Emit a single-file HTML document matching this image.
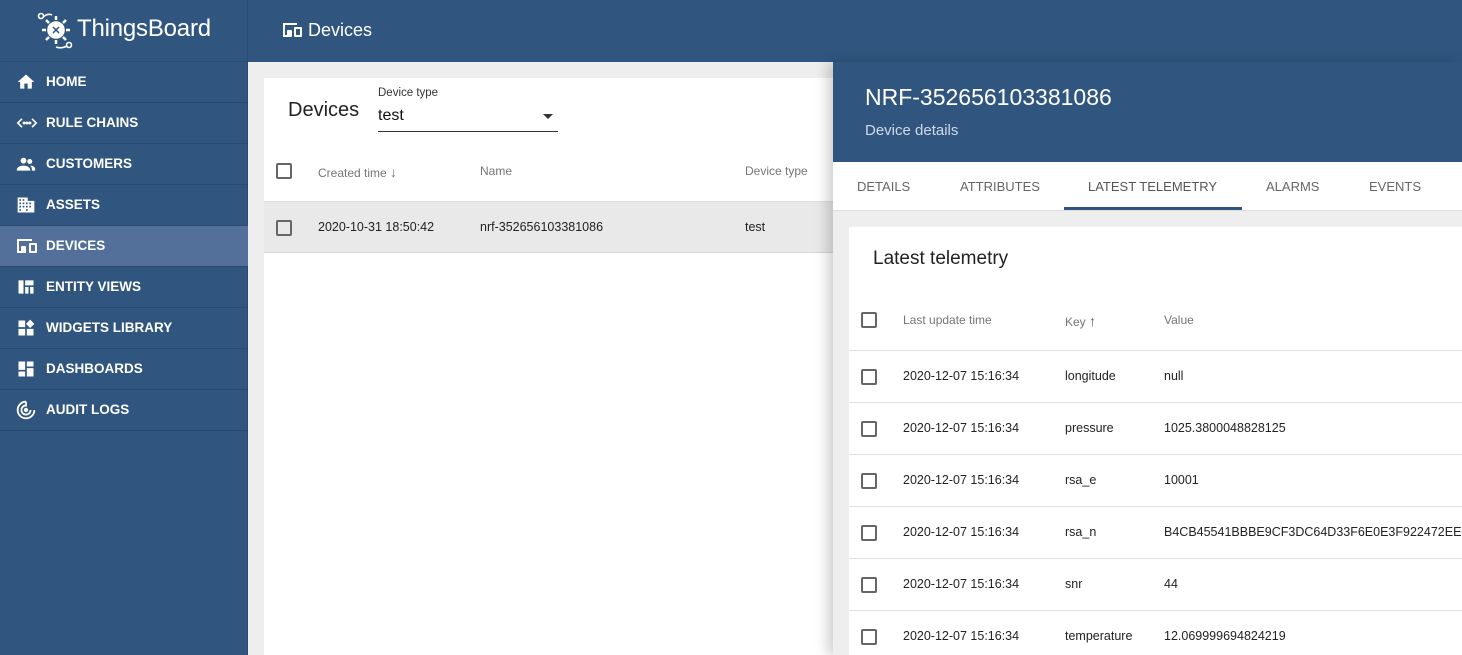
<!DOCTYPE html>
<html><head><meta charset="utf-8"><style>
*{box-sizing:border-box;margin:0;padding:0}
body{width:1462px;height:655px;overflow:hidden;font-family:"Liberation Sans",sans-serif;background:#eeeeee;position:relative}
.a{position:absolute}
.top{left:0;top:0;width:1462px;height:62px;background:#305680}
.side{left:0;top:62px;width:248px;height:593px;background:#305680;border-right:1px solid #2a4b70}
.logo{left:0;top:0;width:248px;height:62px;border-right:1px solid #2a4b70;border-bottom:1px solid #2a4b70}
.mi{position:absolute;left:0;width:248px;height:41px;border-bottom:1px solid #284a6f;color:#fff;font-weight:bold;font-size:13.5px;line-height:40px;padding-left:46px}
.mi.act{background:#527099}
.mi svg{position:absolute;left:16px;top:10px}
.cb{position:absolute;width:16px;height:16px;border:2px solid #666;border-radius:2px}
.txt{position:absolute;font-size:12.5px;color:#222;white-space:nowrap}
.hd{position:absolute;font-size:12px;color:#757575;white-space:nowrap}
.line{position:absolute;height:1px;background:#e0e0e0}
</style></head><body>
<div class="a top"></div>
<div class="a logo"></div>
<svg class="a" style="left:36px;top:11px" width="40" height="40" viewBox="0 0 40 40" fill="none" stroke="#fff" stroke-width="1.6"><circle cx="5" cy="5" r="2.5"/><path d="M7 6 Q12 2 16 4"/><circle cx="20" cy="19" r="8" fill="#fff"/><path d="M20 9v-4M20 29v4M10 19h-4M30 19h4M13 12l-3-3M27 12l3-3M13 26l-3 3M27 26l3 3" stroke-width="2.5"/><path d="M17 16l6 6M23 16l-6 6" stroke="#305680" stroke-width="1.5"/><circle cx="33" cy="34" r="2.5"/><path d="M31 35 Q25 38 20 36"/></svg>
<div class="a" style="left:77px;top:15px;color:#fff;font-size:24px;letter-spacing:-0.2px">ThingsBoard</div>
<svg class="a" style="left:281px;top:21px" width="22" height="18" viewBox="0 0 22 18" fill="#fff"><path d="M2 2h14v2H4v10H2z M2 14h8v2H2z"/><rect x="6" y="9" width="5" height="7" rx="1"/><rect x="13" y="6" width="8" height="10" rx="1"/><rect x="15" y="8" width="4" height="6" fill="#305680"/></svg>
<div class="a" style="left:308px;top:20px;color:#fff;font-size:18px">Devices</div>

<div class="a side">
<div class="mi" style="top:0"><svg width="20" height="20" viewBox="0 0 24 24" fill="#fff"><path d="M10 20v-6h4v6h5v-8h3L12 3 2 12h3v8z"/></svg>HOME</div>
<div class="mi" style="top:41px"><svg width="22" height="20" viewBox="0 0 24 24" fill="none" stroke="#fff" stroke-width="2"><path d="M6 7l-5 5 5 5M18 7l5 5-5 5"/><circle cx="8.5" cy="12" r=".8" fill="#fff"/><circle cx="12" cy="12" r=".8" fill="#fff"/><circle cx="15.5" cy="12" r=".8" fill="#fff"/></svg>RULE CHAINS</div>
<div class="mi" style="top:82px"><svg width="20" height="20" viewBox="0 0 24 24" fill="#fff"><circle cx="9" cy="8" r="3.5"/><circle cx="16.5" cy="9" r="3"/><path d="M1 19c0-3 4-5 8-5s8 2 8 5v1H1z M17 14c3 0 6 1.5 6 4v2h-4v-2c0-1.5-1-3-2-4z"/></svg>CUSTOMERS</div>
<div class="mi" style="top:123px"><svg width="20" height="20" viewBox="0 0 24 24" fill="#fff"><path d="M2 3h12v4h8v14H2z"/><g fill="#305680"><rect x="4" y="5" width="2" height="2"/><rect x="8" y="5" width="2" height="2"/><rect x="4" y="9" width="2" height="2"/><rect x="8" y="9" width="2" height="2"/><rect x="4" y="13" width="2" height="2"/><rect x="8" y="13" width="2" height="2"/><rect x="12" y="9" width="2" height="2"/><rect x="16" y="9" width="2" height="2"/><rect x="12" y="13" width="2" height="2"/><rect x="16" y="13" width="2" height="2"/><rect x="4" y="17" width="2" height="2"/><rect x="12" y="17" width="2" height="2"/></g></svg>ASSETS</div>
<div class="mi act" style="top:164px"><svg width="22" height="20" viewBox="0 0 22 18" fill="#fff"><path d="M1 2h15v2H3v10H1z M1 14h9v2H1z"/><rect x="5" y="9" width="5" height="7" rx="1"/><rect x="13" y="6" width="8" height="10" rx="1"/><rect x="15" y="8" width="4" height="6" fill="#527099"/></svg>DEVICES</div>
<div class="mi" style="top:205px"><svg width="20" height="20" viewBox="0 0 24 24" fill="#fff"><path d="M3 4h6v16H3z M11 4h10v6H11z M11 12h4v8h-4z M17 12h4v8h-4z"/></svg>ENTITY VIEWS</div>
<div class="mi" style="top:246px"><svg width="20" height="20" viewBox="0 0 24 24" fill="#fff"><path d="M3 3h8v8H3z M3 13h8v8H3z M13 13h8v8h-8z M17 2l5 5-5 5-5-5z"/></svg>WIDGETS LIBRARY</div>
<div class="mi" style="top:287px"><svg width="20" height="20" viewBox="0 0 24 24" fill="#fff"><path d="M3 3h8v10H3z M3 15h8v6H3z M13 3h8v6h-8z M13 11h8v10h-8z"/></svg>DASHBOARDS</div>
<div class="mi" style="top:328px"><svg width="20" height="20" viewBox="0 0 24 24" fill="none" stroke="#fff" stroke-width="2.2"><path d="M12 2a10 10 0 1 0 10 10"/><path d="M12 6.5a5.5 5.5 0 1 0 5.5 5.5"/><circle cx="12" cy="12" r="1.5" fill="#fff"/><path d="M12 2v6"/></svg>AUDIT LOGS</div>
</div>

<div class="a" style="left:264px;top:78px;width:600px;height:577px;background:#fff"></div>
<div class="a" style="left:288px;top:99px;font-size:20px;color:#222">Devices</div>
<div class="a" style="left:378px;top:87px;font-size:11.5px;color:#333">Device type</div>
<div class="a" style="left:378px;top:107px;font-size:16px;color:#111">test</div>
<div class="a" style="left:378px;top:131px;width:180px;height:1px;background:#333"></div>
<div class="a" style="left:543px;top:114px;border-left:5px solid transparent;border-right:5px solid transparent;border-top:5px solid #333"></div>
<div class="cb" style="left:276px;top:163px"></div>
<div class="hd" style="left:318px;top:164px">Created time <span style="font-size:14px">&#8595;</span></div>
<div class="hd" style="left:480px;top:164px">Name</div>
<div class="hd" style="left:745px;top:164px">Device type</div>
<div class="a" style="left:264px;top:201px;width:600px;height:52px;background:#e9e9e9;border-top:1px solid #ddd;border-bottom:1px solid #d6d6d6"></div>
<div class="cb" style="left:276px;top:220px"></div>
<div class="txt" style="left:318px;top:220px">2020-10-31 18:50:42</div>
<div class="txt" style="left:480px;top:220px">nrf-352656103381086</div>
<div class="txt" style="left:745px;top:220px">test</div>

<div class="a" style="left:833px;top:62px;width:629px;height:593px;background:#eee;box-shadow:-6px 0 12px rgba(0,0,0,.18)"></div>
<div class="a" style="left:833px;top:62px;width:629px;height:100px;background:#305680"></div>
<div class="a" style="left:865px;top:84px;font-size:23px;color:#fff">NRF-352656103381086</div>
<div class="a" style="left:865px;top:122px;font-size:15px;color:#d0d9e4">Device details</div>
<div class="a" style="left:833px;top:162px;width:629px;height:49px;background:#fff;border-bottom:1px solid #ddd"></div>
<div class="hd" style="left:857px;top:179px;font-size:13px;color:#666">DETAILS</div>
<div class="hd" style="left:960px;top:179px;font-size:13px;color:#666">ATTRIBUTES</div>
<div class="hd" style="left:1088px;top:179px;font-size:13px;color:#555">LATEST TELEMETRY</div>
<div class="hd" style="left:1266px;top:179px;font-size:13px;color:#666">ALARMS</div>
<div class="hd" style="left:1369px;top:179px;font-size:13px;color:#666">EVENTS</div>
<div class="a" style="left:1064px;top:207px;width:178px;height:3px;background:#305680"></div>

<div class="a" style="left:849px;top:227px;width:613px;height:428px;background:#fff"></div>
<div class="a" style="left:873px;top:248px;font-size:19px;color:#222">Latest telemetry</div>
<div class="cb" style="left:861px;top:312px"></div>
<div class="hd" style="left:903px;top:313px">Last update time</div>
<div class="hd" style="left:1065px;top:313px">Key <span style="font-size:14px;color:#555">&#8593;</span></div>
<div class="hd" style="left:1164px;top:313px">Value</div>
<div class="line" style="left:849px;top:350px;width:613px"></div>
<div class="line" style="left:849px;top:402px;width:613px"></div>
<div class="line" style="left:849px;top:454px;width:613px"></div>
<div class="line" style="left:849px;top:506px;width:613px"></div>
<div class="line" style="left:849px;top:558px;width:613px"></div>
<div class="line" style="left:849px;top:610px;width:613px"></div>

<div class="cb" style="left:861px;top:369px"></div><div class="txt" style="left:903px;top:369px">2020-12-07 15:16:34</div><div class="txt" style="left:1065px;top:369px">longitude</div><div class="txt" style="left:1164px;top:369px">null</div>
<div class="cb" style="left:861px;top:421px"></div><div class="txt" style="left:903px;top:421px">2020-12-07 15:16:34</div><div class="txt" style="left:1065px;top:421px">pressure</div><div class="txt" style="left:1164px;top:421px">1025.3800048828125</div>
<div class="cb" style="left:861px;top:473px"></div><div class="txt" style="left:903px;top:473px">2020-12-07 15:16:34</div><div class="txt" style="left:1065px;top:473px">rsa_e</div><div class="txt" style="left:1164px;top:473px">10001</div>
<div class="cb" style="left:861px;top:525px"></div><div class="txt" style="left:903px;top:525px">2020-12-07 15:16:34</div><div class="txt" style="left:1065px;top:525px">rsa_n</div><div class="txt" style="left:1164px;top:525px;width:298px;overflow:hidden">B4CB45541BBBE9CF3DC64D33F6E0E3F922472EE0A</div>
<div class="cb" style="left:861px;top:577px"></div><div class="txt" style="left:903px;top:577px">2020-12-07 15:16:34</div><div class="txt" style="left:1065px;top:577px">snr</div><div class="txt" style="left:1164px;top:577px">44</div>
<div class="cb" style="left:861px;top:629px"></div><div class="txt" style="left:903px;top:629px">2020-12-07 15:16:34</div><div class="txt" style="left:1065px;top:629px">temperature</div><div class="txt" style="left:1164px;top:629px">12.069999694824219</div>
</body></html>
